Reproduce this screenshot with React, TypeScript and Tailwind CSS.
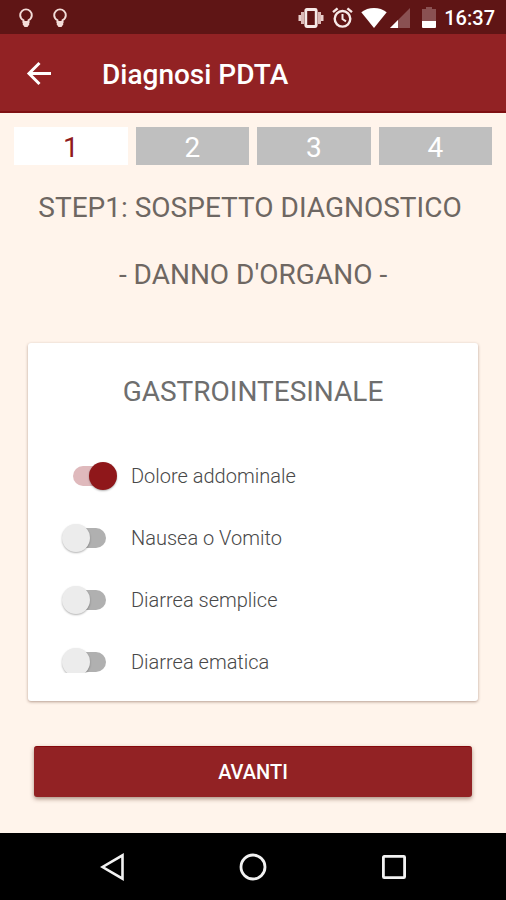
import { useState } from "react";

function BulbIcon() {
  return (
    <svg className="h-5 w-4" viewBox="0 0 16 20" fill="none" aria-hidden="true">
      <path
        d="M5.500 14V12.300C3.400 11 2.200 9.200 2.200 7.200a5.800 5.800 0 0 1 11.600 0c0 2-1.200 3.800-3.300 5.100V14z"
        stroke="#f3dcd8"
        strokeWidth="1.900"
      />
      <path d="M4.800 13h6.400v3.500L9.500 19h-3l-1.700-2.500z" fill="#f3dcd8" />
    </svg>
  );
}

function VibrateIcon() {
  return (
    <svg className="h-5 w-[26px]" viewBox="0 0 26 20" aria-hidden="true">
      <rect x="7.800" y="1.500" width="10.400" height="17" rx="1" fill="none" stroke="#f7e9e7" strokeWidth="2.800" />
      <path d="M3 4h3v12H3zM20 4h3v12h-3z" fill="#dcb9b6" />
      <path d="M0.500 7H3v6H0.500zM23 7h2.500v6H23z" fill="#e9cfcc" />
    </svg>
  );
}

function AlarmIcon() {
  return (
    <svg className="h-[21px] w-[21px]" viewBox="0 0 21 21" fill="none" stroke="#f7e9e7" aria-hidden="true">
      <circle cx="10.500" cy="11.800" r="7.800" strokeWidth="2.400" />
      <path d="M10.500 7v5l3.500 2.300" strokeWidth="2" />
      <path d="M1 5.200 5.600 1.300M20 5.200l-4.600-3.900" strokeWidth="2.400" />
    </svg>
  );
}

function WifiIcon() {
  return (
    <svg className="h-5 w-[26px]" viewBox="0 0 26 20" aria-hidden="true">
      <path d="M13 20 0.300 4.300C3.800 1.500 8.200 0 13 0s9.200 1.500 12.700 4.300z" fill="#fff" />
    </svg>
  );
}

function SignalIcon() {
  return (
    <svg className="h-5 w-5" viewBox="0 0 20 20" aria-hidden="true">
      <path d="M20 0v20H0z" fill="#8a5152" />
      <path d="M8 12v8H0z" fill="#fff" />
    </svg>
  );
}

function BatteryIcon() {
  return (
    <svg className="h-[21px] w-[14px]" viewBox="0 0 14 21" aria-hidden="true">
      <path d="M4 0h6v2h4v12H0V2h4z" fill="#8a5152" />
      <path d="M0 14h14v6a1 1 0 0 1-1 1H1a1 1 0 0 1-1-1z" fill="#fff" />
    </svg>
  );
}

function StatusBar() {
  return (
    <div className="flex h-[34px] items-center bg-[#5f1515] pt-px pl-[18px] pr-[11px]">
      <div className="flex flex-1 gap-[18px]">
        <BulbIcon />
        <BulbIcon />
      </div>
      <div className="flex items-center">
        <VibrateIcon />
        <span className="ml-2 flex"><AlarmIcon /></span>
        <span className="ml-2 flex"><WifiIcon /></span>
        <span className="ml-[3px] flex"><SignalIcon /></span>
        <span className="ml-3 flex"><BatteryIcon /></span>
        <time className="ml-2 text-[20px] leading-6 font-medium text-white">16:37</time>
      </div>
    </div>
  );
}

function AppBar() {
  return (
    <header className="flex h-[79px] items-center border-b-2 border-[#7f1012] bg-[#922224] pl-[26px]">
      <button type="button" aria-label="Indietro" className="flex h-8 w-[26px] items-center justify-center">
        <svg className="h-[26px] w-[26px]" viewBox="0 0 26 26" fill="none" stroke="#fff" strokeWidth="3" aria-hidden="true">
          <path d="M25 13.500H3.500M13.500 3 3 13.500 13.500 24" />
        </svg>
      </button>
      <h1 className="ml-[50px] pt-1 text-[28px] leading-8 font-medium text-white">Diagnosi PDTA</h1>
    </header>
  );
}

const steps = [1, 2, 3, 4];

function Steps() {
  const [current, setCurrent] = useState(1);
  return (
    <nav aria-label="Passi" className="grid grid-cols-4 gap-2 px-[14px]">
      {steps.map((step) => (
        <button
          key={step}
          type="button"
          aria-current={step === current ? "step" : undefined}
          onClick={() => setCurrent(step)}
          className={
            step === current
              ? "h-[38px] bg-white pt-1 text-[28px] leading-8 text-[#8f1a1c]"
              : "h-[38px] bg-[#bfbfbf] pt-1 text-[28px] leading-8 text-white"
          }
        >
          {step}
        </button>
      ))}
    </nav>
  );
}

const symptoms = [
  { id: "dolore", label: "Dolore addominale", on: true },
  { id: "nausea", label: "Nausea o Vomito", on: false },
  { id: "semplice", label: "Diarrea semplice", on: false },
  { id: "ematica", label: "Diarrea ematica", on: false },
];

function SymptomSwitch({ id, label, on }: { id: string; label: string; on: boolean }) {
  return (
    <li className="flex h-[62px] items-center pl-[45px]">
      <input
        id={id}
        type="checkbox"
        role="switch"
        defaultChecked={on}
        className="relative h-5 w-[33px] shrink-0 appearance-none rounded-full bg-[#b0b0b0] before:absolute before:-top-1 before:-left-[11px] before:size-7 before:rounded-full before:bg-[#ececec] before:shadow-[0_1px_2px_rgba(0,0,0,0.3)] checked:bg-[#dfb9bc] checked:before:left-4 checked:before:bg-[#8f171a]"
      />
      <label htmlFor={id} className="ml-[25px] text-[20px] leading-5 font-light text-[#484848]">
        {label}
      </label>
    </li>
  );
}

function SymptomCard() {
  return (
    <section className="mx-7 mt-[50px] rounded-[3px] bg-white pt-[31px] pb-7 shadow-[0_1px_3px_rgba(90,50,30,0.45)]">
      <h3 className="text-center text-[28px] leading-9 text-[#6e6e6e]">GASTROINTESINALE</h3>
      <ul className="mt-[35px] h-[228px] overflow-hidden">
        {symptoms.map((s) => (
          <SymptomSwitch key={s.id} {...s} />
        ))}
      </ul>
    </section>
  );
}

function SystemNav() {
  return (
    <footer className="flex h-[67px] items-center justify-center gap-[114px] bg-black">
      <button type="button" aria-label="Indietro di sistema">
        <svg className="h-7 w-[26px]" viewBox="0 0 26 28" fill="none" stroke="#f2f2f2" strokeWidth="2.600" aria-hidden="true">
          <path d="M23.500 2.300v23.400L3.600 14z" />
        </svg>
      </button>
      <button type="button" aria-label="Home">
        <svg className="h-7 w-7" viewBox="0 0 28 28" fill="none" stroke="#f2f2f2" strokeWidth="2.800" aria-hidden="true">
          <circle cx="14" cy="14" r="12" />
        </svg>
      </button>
      <button type="button" aria-label="Recenti">
        <svg className="h-7 w-[26px]" viewBox="0 0 26 28" fill="none" stroke="#f2f2f2" strokeWidth="2.800" aria-hidden="true">
          <rect x="2.400" y="3.400" width="21.200" height="21.200" rx="0.800" />
        </svg>
      </button>
    </footer>
  );
}

export default function App() {
  return (
    <div className="flex min-h-screen flex-col bg-[#fff4eb] font-[Roboto,sans-serif]">
      <StatusBar />
      <AppBar />
      <main className="flex-1 pt-[14px]">
        <Steps />
        <h2 className="mt-[25px] pr-1.5 text-center text-[28px] leading-9 text-[#6e6762]">STEP1: SOSPETTO DIAGNOSTICO</h2>
        <p className="mt-[31px] text-center text-[28px] leading-9 text-[#6e6762]">- DANNO D'ORGANO -</p>
        <SymptomCard />
        <div className="mt-[45px] px-[34px]">
          <button
            type="button"
            className="h-[51px] w-full rounded-[3px] border-t border-[#85080c] bg-[#922224] text-[20px] leading-6 font-medium text-white shadow-[0_2px_4px_rgba(90,50,30,0.5)]"
          >
            AVANTI
          </button>
        </div>
      </main>
      <SystemNav />
    </div>
  );
}
